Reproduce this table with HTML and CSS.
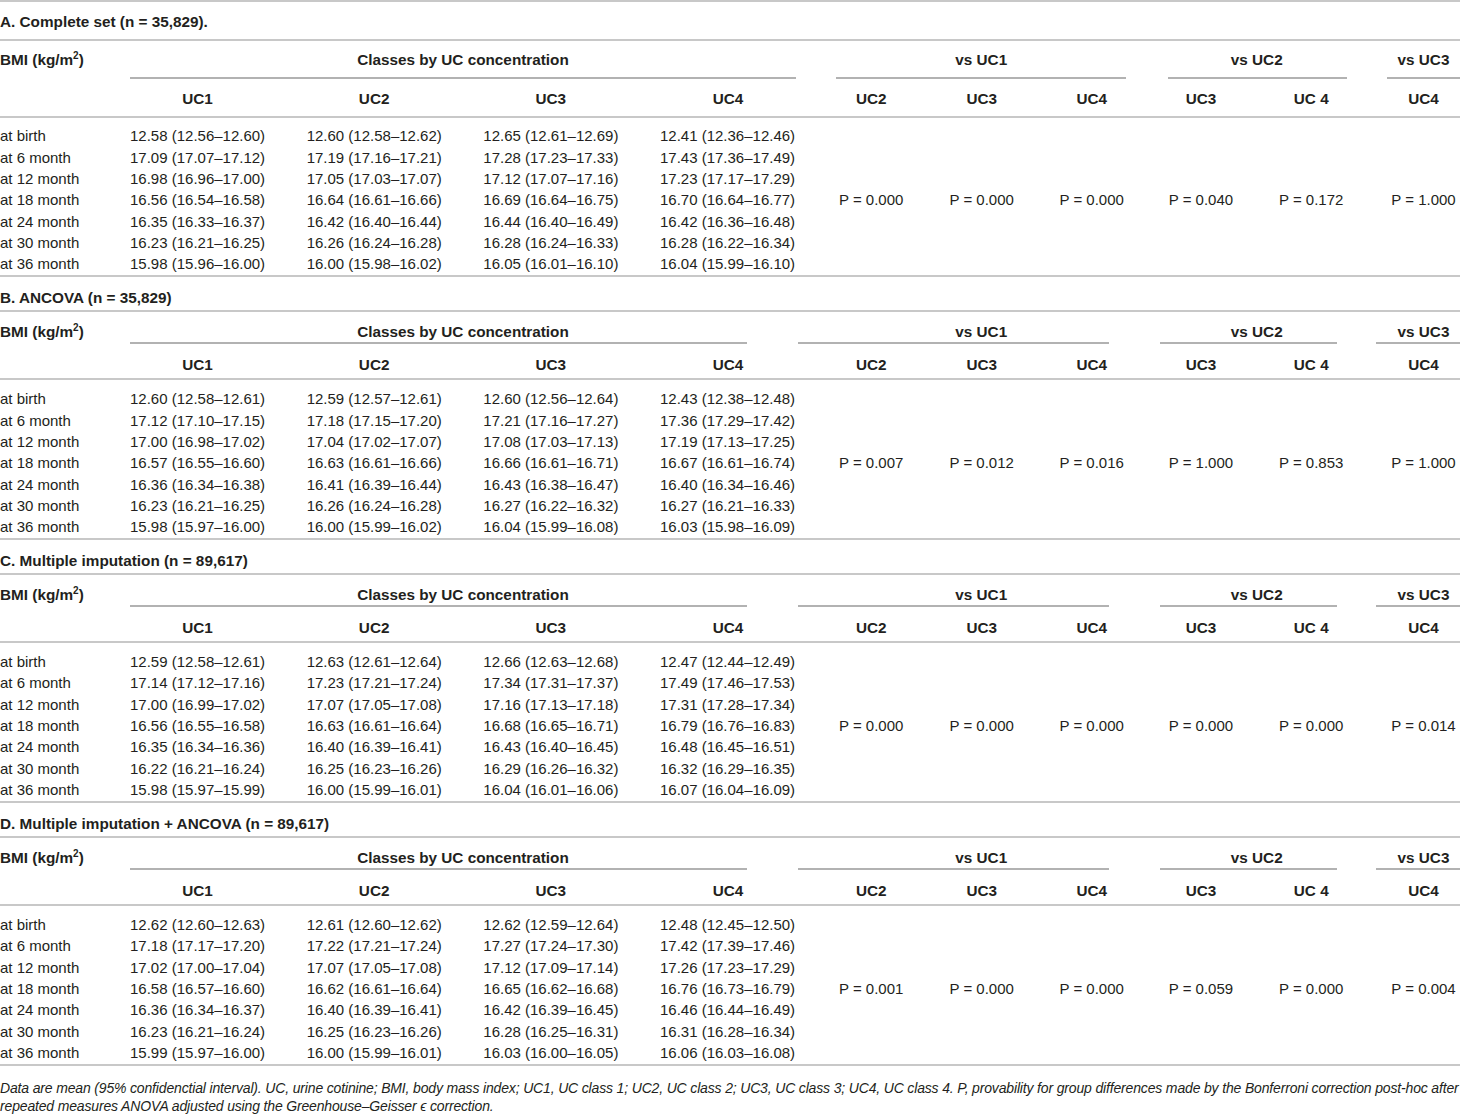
FILE: index.html
```html
<!DOCTYPE html>
<html lang="en">
    <head>
        <meta charset="UTF-8">
        <title>BMI by urine cotinine class</title>
        <link rel="stylesheet" href="styles.css">
    </head>
    <body>
        <table class="resultados">
            <colgroup>
                <col class="c-label">
                <col class="c-dato">
                <col class="c-dato">
                <col class="c-dato">
                <col class="c-uc4">
                <col class="c-p1">
                <col class="c-p2">
                <col class="c-p3">
                <col class="c-p4">
                <col class="c-p5">
                <col class="c-p6">
            </colgroup>

            <!-- A -->
            <tbody class="seccion seccion-a">
                <tr class="titulo"><th colspan="11">A. Complete set (n = 35,829).</th></tr>
                <tr class="grupos">
                    <th class="bmi">BMI (kg/m<sup>2</sup>)</th>
                    <th colspan="4" class="g-clases"><div class="g-texto">Classes by UC concentration</div><div class="regla"></div></th>
                    <th colspan="3" class="g-uc1"><div class="g-texto">vs UC1</div><div class="regla"></div></th>
                    <th colspan="2" class="g-uc2"><div class="g-texto">vs UC2</div><div class="regla"></div></th>
                    <th class="g-uc3"><div class="g-texto">vs UC3</div><div class="regla"></div></th>
                </tr>
                <tr class="sub">
                    <th></th><th>UC1</th><th>UC2</th><th>UC3</th><th>UC4</th>
                    <th>UC2</th><th>UC3</th><th>UC4</th><th>UC3</th><th>UC 4</th><th>UC4</th>
                </tr>
                <tr class="primera"><td>at birth</td><td>12.58 (12.56–12.60)</td><td>12.60 (12.58–12.62)</td><td>12.65 (12.61–12.69)</td><td>12.41 (12.36–12.46)</td><td></td><td></td><td></td><td></td><td></td><td></td></tr>
                <tr><td>at 6 month</td><td>17.09 (17.07–17.12)</td><td>17.19 (17.16–17.21)</td><td>17.28 (17.23–17.33)</td><td>17.43 (17.36–17.49)</td><td></td><td></td><td></td><td></td><td></td><td></td></tr>
                <tr><td>at 12 month</td><td>16.98 (16.96–17.00)</td><td>17.05 (17.03–17.07)</td><td>17.12 (17.07–17.16)</td><td>17.23 (17.17–17.29)</td><td></td><td></td><td></td><td></td><td></td><td></td></tr>
                <tr><td>at 18 month</td><td>16.56 (16.54–16.58)</td><td>16.64 (16.61–16.66)</td><td>16.69 (16.64–16.75)</td><td>16.70 (16.64–16.77)</td><td>P = 0.000</td><td>P = 0.000</td><td>P = 0.000</td><td>P = 0.040</td><td>P = 0.172</td><td>P = 1.000</td></tr>
                <tr><td>at 24 month</td><td>16.35 (16.33–16.37)</td><td>16.42 (16.40–16.44)</td><td>16.44 (16.40–16.49)</td><td>16.42 (16.36–16.48)</td><td></td><td></td><td></td><td></td><td></td><td></td></tr>
                <tr><td>at 30 month</td><td>16.23 (16.21–16.25)</td><td>16.26 (16.24–16.28)</td><td>16.28 (16.24–16.33)</td><td>16.28 (16.22–16.34)</td><td></td><td></td><td></td><td></td><td></td><td></td></tr>
                <tr class="ultima"><td>at 36 month</td><td>15.98 (15.96–16.00)</td><td>16.00 (15.98–16.02)</td><td>16.05 (16.01–16.10)</td><td>16.04 (15.99–16.10)</td><td></td><td></td><td></td><td></td><td></td><td></td></tr>
            </tbody>

            <!-- B -->
            <tbody class="seccion">
                <tr class="titulo"><th colspan="11">B. ANCOVA (n = 35,829)</th></tr>
                <tr class="grupos">
                    <th class="bmi">BMI (kg/m<sup>2</sup>)</th>
                    <th colspan="4" class="g-clases"><div class="g-texto">Classes by UC concentration</div><div class="regla"></div></th>
                    <th colspan="3" class="g-uc1"><div class="g-texto">vs UC1</div><div class="regla"></div></th>
                    <th colspan="2" class="g-uc2"><div class="g-texto">vs UC2</div><div class="regla"></div></th>
                    <th class="g-uc3"><div class="g-texto">vs UC3</div><div class="regla"></div></th>
                </tr>
                <tr class="sub">
                    <th></th><th>UC1</th><th>UC2</th><th>UC3</th><th>UC4</th>
                    <th>UC2</th><th>UC3</th><th>UC4</th><th>UC3</th><th>UC 4</th><th>UC4</th>
                </tr>
                <tr class="primera"><td>at birth</td><td>12.60 (12.58–12.61)</td><td>12.59 (12.57–12.61)</td><td>12.60 (12.56–12.64)</td><td>12.43 (12.38–12.48)</td><td></td><td></td><td></td><td></td><td></td><td></td></tr>
                <tr><td>at 6 month</td><td>17.12 (17.10–17.15)</td><td>17.18 (17.15–17.20)</td><td>17.21 (17.16–17.27)</td><td>17.36 (17.29–17.42)</td><td></td><td></td><td></td><td></td><td></td><td></td></tr>
                <tr><td>at 12 month</td><td>17.00 (16.98–17.02)</td><td>17.04 (17.02–17.07)</td><td>17.08 (17.03–17.13)</td><td>17.19 (17.13–17.25)</td><td></td><td></td><td></td><td></td><td></td><td></td></tr>
                <tr><td>at 18 month</td><td>16.57 (16.55–16.60)</td><td>16.63 (16.61–16.66)</td><td>16.66 (16.61–16.71)</td><td>16.67 (16.61–16.74)</td><td>P = 0.007</td><td>P = 0.012</td><td>P = 0.016</td><td>P = 1.000</td><td>P = 0.853</td><td>P = 1.000</td></tr>
                <tr><td>at 24 month</td><td>16.36 (16.34–16.38)</td><td>16.41 (16.39–16.44)</td><td>16.43 (16.38–16.47)</td><td>16.40 (16.34–16.46)</td><td></td><td></td><td></td><td></td><td></td><td></td></tr>
                <tr><td>at 30 month</td><td>16.23 (16.21–16.25)</td><td>16.26 (16.24–16.28)</td><td>16.27 (16.22–16.32)</td><td>16.27 (16.21–16.33)</td><td></td><td></td><td></td><td></td><td></td><td></td></tr>
                <tr class="ultima"><td>at 36 month</td><td>15.98 (15.97–16.00)</td><td>16.00 (15.99–16.02)</td><td>16.04 (15.99–16.08)</td><td>16.03 (15.98–16.09)</td><td></td><td></td><td></td><td></td><td></td><td></td></tr>
            </tbody>

            <!-- C -->
            <tbody class="seccion">
                <tr class="titulo"><th colspan="11">C. Multiple imputation (n = 89,617)</th></tr>
                <tr class="grupos">
                    <th class="bmi">BMI (kg/m<sup>2</sup>)</th>
                    <th colspan="4" class="g-clases"><div class="g-texto">Classes by UC concentration</div><div class="regla"></div></th>
                    <th colspan="3" class="g-uc1"><div class="g-texto">vs UC1</div><div class="regla"></div></th>
                    <th colspan="2" class="g-uc2"><div class="g-texto">vs UC2</div><div class="regla"></div></th>
                    <th class="g-uc3"><div class="g-texto">vs UC3</div><div class="regla"></div></th>
                </tr>
                <tr class="sub">
                    <th></th><th>UC1</th><th>UC2</th><th>UC3</th><th>UC4</th>
                    <th>UC2</th><th>UC3</th><th>UC4</th><th>UC3</th><th>UC 4</th><th>UC4</th>
                </tr>
                <tr class="primera"><td>at birth</td><td>12.59 (12.58–12.61)</td><td>12.63 (12.61–12.64)</td><td>12.66 (12.63–12.68)</td><td>12.47 (12.44–12.49)</td><td></td><td></td><td></td><td></td><td></td><td></td></tr>
                <tr><td>at 6 month</td><td>17.14 (17.12–17.16)</td><td>17.23 (17.21–17.24)</td><td>17.34 (17.31–17.37)</td><td>17.49 (17.46–17.53)</td><td></td><td></td><td></td><td></td><td></td><td></td></tr>
                <tr><td>at 12 month</td><td>17.00 (16.99–17.02)</td><td>17.07 (17.05–17.08)</td><td>17.16 (17.13–17.18)</td><td>17.31 (17.28–17.34)</td><td></td><td></td><td></td><td></td><td></td><td></td></tr>
                <tr><td>at 18 month</td><td>16.56 (16.55–16.58)</td><td>16.63 (16.61–16.64)</td><td>16.68 (16.65–16.71)</td><td>16.79 (16.76–16.83)</td><td>P = 0.000</td><td>P = 0.000</td><td>P = 0.000</td><td>P = 0.000</td><td>P = 0.000</td><td>P = 0.014</td></tr>
                <tr><td>at 24 month</td><td>16.35 (16.34–16.36)</td><td>16.40 (16.39–16.41)</td><td>16.43 (16.40–16.45)</td><td>16.48 (16.45–16.51)</td><td></td><td></td><td></td><td></td><td></td><td></td></tr>
                <tr><td>at 30 month</td><td>16.22 (16.21–16.24)</td><td>16.25 (16.23–16.26)</td><td>16.29 (16.26–16.32)</td><td>16.32 (16.29–16.35)</td><td></td><td></td><td></td><td></td><td></td><td></td></tr>
                <tr class="ultima"><td>at 36 month</td><td>15.98 (15.97–15.99)</td><td>16.00 (15.99–16.01)</td><td>16.04 (16.01–16.06)</td><td>16.07 (16.04–16.09)</td><td></td><td></td><td></td><td></td><td></td><td></td></tr>
            </tbody>

            <!-- D -->
            <tbody class="seccion">
                <tr class="titulo"><th colspan="11">D. Multiple imputation + ANCOVA (n = 89,617)</th></tr>
                <tr class="grupos">
                    <th class="bmi">BMI (kg/m<sup>2</sup>)</th>
                    <th colspan="4" class="g-clases"><div class="g-texto">Classes by UC concentration</div><div class="regla"></div></th>
                    <th colspan="3" class="g-uc1"><div class="g-texto">vs UC1</div><div class="regla"></div></th>
                    <th colspan="2" class="g-uc2"><div class="g-texto">vs UC2</div><div class="regla"></div></th>
                    <th class="g-uc3"><div class="g-texto">vs UC3</div><div class="regla"></div></th>
                </tr>
                <tr class="sub">
                    <th></th><th>UC1</th><th>UC2</th><th>UC3</th><th>UC4</th>
                    <th>UC2</th><th>UC3</th><th>UC4</th><th>UC3</th><th>UC 4</th><th>UC4</th>
                </tr>
                <tr class="primera"><td>at birth</td><td>12.62 (12.60–12.63)</td><td>12.61 (12.60–12.62)</td><td>12.62 (12.59–12.64)</td><td>12.48 (12.45–12.50)</td><td></td><td></td><td></td><td></td><td></td><td></td></tr>
                <tr><td>at 6 month</td><td>17.18 (17.17–17.20)</td><td>17.22 (17.21–17.24)</td><td>17.27 (17.24–17.30)</td><td>17.42 (17.39–17.46)</td><td></td><td></td><td></td><td></td><td></td><td></td></tr>
                <tr><td>at 12 month</td><td>17.02 (17.00–17.04)</td><td>17.07 (17.05–17.08)</td><td>17.12 (17.09–17.14)</td><td>17.26 (17.23–17.29)</td><td></td><td></td><td></td><td></td><td></td><td></td></tr>
                <tr><td>at 18 month</td><td>16.58 (16.57–16.60)</td><td>16.62 (16.61–16.64)</td><td>16.65 (16.62–16.68)</td><td>16.76 (16.73–16.79)</td><td>P = 0.001</td><td>P = 0.000</td><td>P = 0.000</td><td>P = 0.059</td><td>P = 0.000</td><td>P = 0.004</td></tr>
                <tr><td>at 24 month</td><td>16.36 (16.34–16.37)</td><td>16.40 (16.39–16.41)</td><td>16.42 (16.39–16.45)</td><td>16.46 (16.44–16.49)</td><td></td><td></td><td></td><td></td><td></td><td></td></tr>
                <tr><td>at 30 month</td><td>16.23 (16.21–16.24)</td><td>16.25 (16.23–16.26)</td><td>16.28 (16.25–16.31)</td><td>16.31 (16.28–16.34)</td><td></td><td></td><td></td><td></td><td></td><td></td></tr>
                <tr class="ultima"><td>at 36 month</td><td>15.99 (15.97–16.00)</td><td>16.00 (15.99–16.01)</td><td>16.03 (16.00–16.05)</td><td>16.06 (16.03–16.08)</td><td></td><td></td><td></td><td></td><td></td><td></td></tr>
            </tbody>
        </table>
        <p class="nota">Data are mean (95% confidenctial interval). UC, urine cotinine; BMI, body mass index; UC1, UC class 1; UC2, UC class 2; UC3, UC class 3; UC4, UC class 4. P, provability for group differences made by the Bonferroni correction post-hoc after repeated measures ANOVA adjusted using the Greenhouse–Geisser ϵ correction.</p>
    </body>
</html>
```

FILE: styles.css
```css
body {
    margin: 0;
    background: #ffffff;
    color: #231f20;
    font-family: "Liberation Sans", Arial, sans-serif;
    font-size: 15px;
}
.resultados {
    width: 1460px;
    table-layout: fixed;
    border-collapse: separate;
    border-spacing: 0;
    border-bottom: 2px solid #c8c8c8;
}
.c-label { width: 130px; }
.c-dato { width: 176.67px; }
.c-uc4 { width: 156px; }
.c-p1 { width: 110.5px; }
.c-p2 { width: 110.5px; }
.c-p3 { width: 109.5px; }
.c-p4 { width: 109px; }
.c-p5 { width: 111.5px; }
.c-p6 { width: 93px; }

th, td {
    padding: 0;
    vertical-align: top;
    white-space: nowrap;
}
th {
    font-weight: bold;
    font-size: 15.3px;
}
sup {
    font-size: 10px;
    line-height: 0;
    vertical-align: 6px;
}

/* titulo de cada bloque */
.titulo th {
    text-align: left;
    line-height: 17px;
    padding: 12px 0 4px;
    border-top: 2px solid #c8c8c8;
    border-bottom: 2px solid #c8c8c8;
}
.seccion-a .titulo th {
    padding: 10.5px 0 9.5px;
}

/* fila de grupos */
.grupos th {
    line-height: 17px;
}
.grupos .bmi {
    text-align: left;
    padding-top: 11.5px;
}
.seccion-a .grupos .bmi {
    padding-top: 9.5px;
}
.g-texto {
    text-align: center;
    padding: 11.5px 0 1.5px;
}
.seccion-a .g-texto {
    padding: 9.5px 0 9.5px;
}
.g-clases .g-texto { padding-right: 20px; }
.g-uc3 .g-texto { padding-left: 20px; }
.regla {
    border-top: 2px solid #b2b2b2;
}
.g-clases .regla { margin: 0 69px 0 0; }
.g-uc1 .regla { margin: 0 37.5px 0 -18px; }
.g-uc2 .regla { margin: 0 30px 0 13.5px; }
.g-uc3 .regla { margin: 0 0 0 9px; }
.seccion-a .g-clases .regla { margin: 0 20px 0 0; }
.seccion-a .g-uc1 .regla { margin: 0 20px; }
.seccion-a .g-uc2 .regla { margin: 0 20px 0 21.5px; }
.seccion-a .g-uc3 .regla { margin: 0 0 0 20px; }

/* fila UC1..UC4 */
.sub th {
    line-height: 17px;
    padding-top: 12.5px;
    padding-bottom: 4.5px;
    text-align: center;
    border-bottom: 2px solid #c8c8c8;
}
.seccion-a .sub th {
    padding-top: 10.5px;
    padding-bottom: 9.5px;
}
.sub th:nth-child(2), .sub th:nth-child(3), .sub th:nth-child(4) {
    padding-right: 41.67px;
}
.sub th:nth-child(5) { padding-right: 20px; }
.sub th:nth-child(11) { padding-left: 20px; }

/* datos */
td {
    line-height: 21.33px;
    height: 21.33px;
}
td:nth-child(n+6) {
    text-align: center;
}
td:nth-child(11) { padding-left: 20px; }
.primera td { padding-top: 8.3px; }
.seccion-a .primera td { padding-top: 7.3px; }
.ultima td { padding-bottom: 0.3px; }

.nota {
    margin: 0;
    padding-top: 13px;
    font-style: italic;
    font-size: 14px;
    line-height: 18px;
    letter-spacing: -0.16px;
}
```
